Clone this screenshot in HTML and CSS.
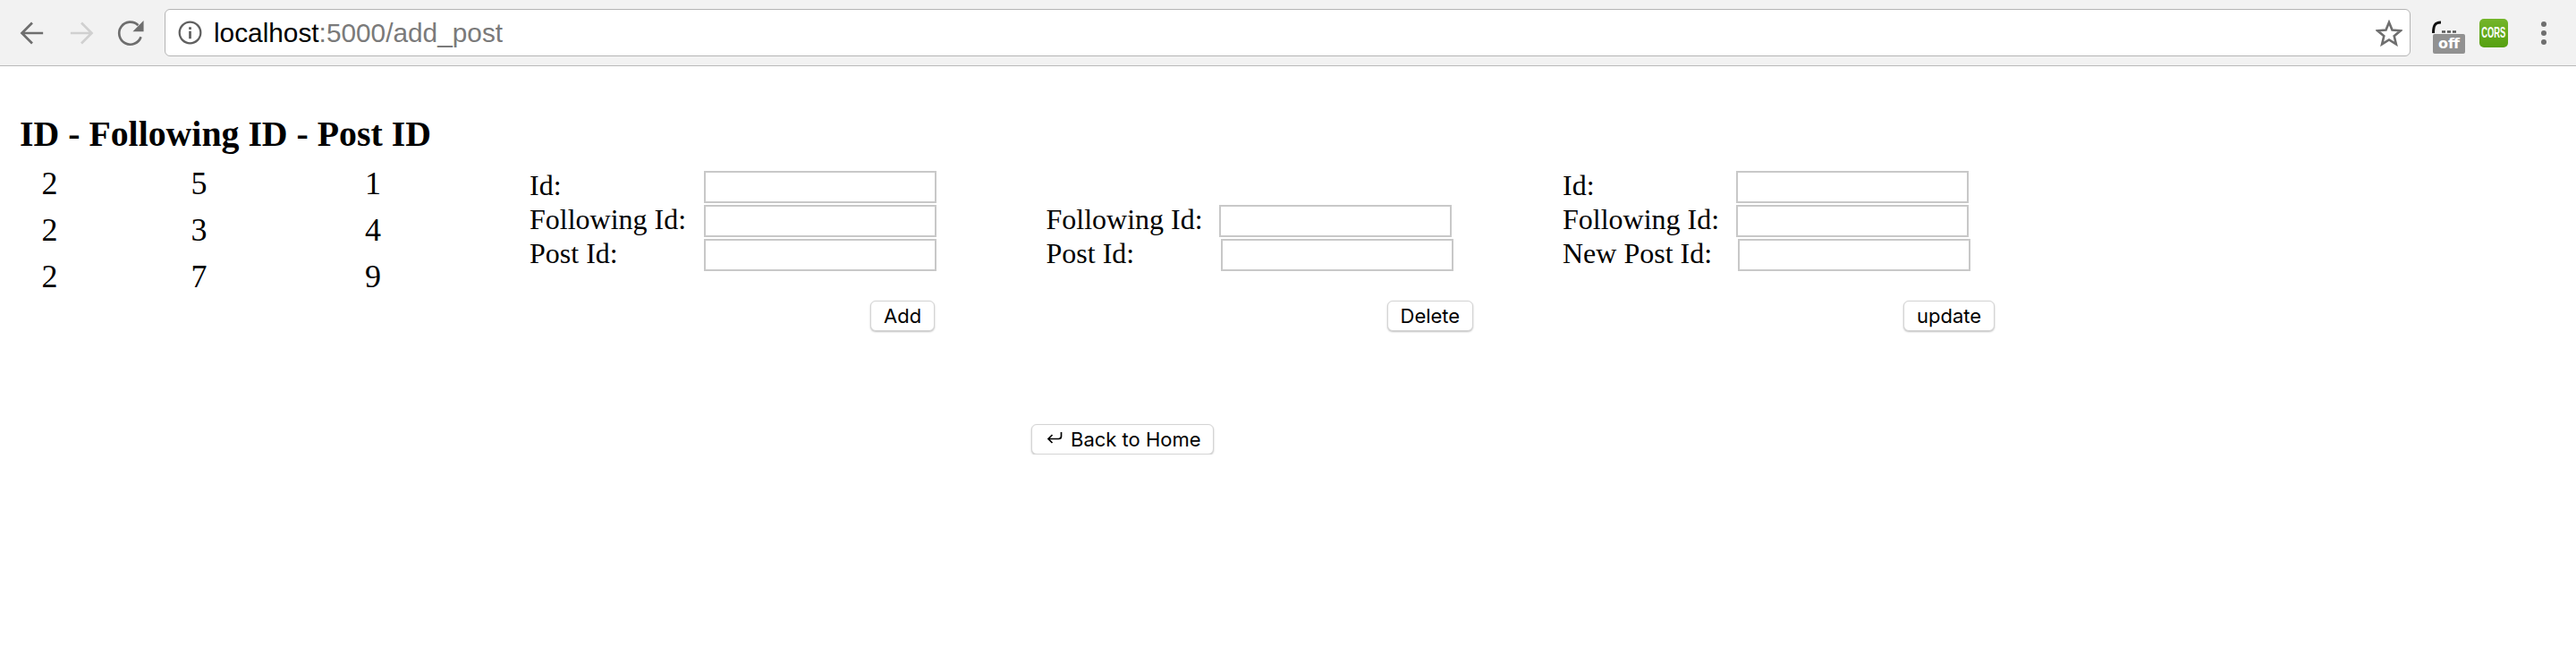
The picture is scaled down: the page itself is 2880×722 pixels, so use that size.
FILE: index.html
```html
<!DOCTYPE html>
<html lang="en">
<head>
  <meta charset="UTF-8">
  <meta name="viewport" content="width=device-width, initial-scale=1.0">
  <title>Add Post</title>
  <link rel="stylesheet" href="styles.css">
</head>
<body>
  <div class="toolbar">
    <svg class="nav-icon" viewBox="0 0 28 28"><path d="M24 14H5M14 4.500L4.500 14L14 23.500" fill="none" stroke="#6e6e6e" stroke-width="2.200"/></svg>
    <svg class="nav-icon" viewBox="0 0 28 28"><path d="M4 14H23M14 4.500L23.500 14L14 23.500" fill="none" stroke="#d0d0d0" stroke-width="2.200"/></svg>
    <svg class="nav-icon" viewBox="0 0 28 28"><path d="M23.500 17.500A10.300 10.300 0 1 1 21 6.800" fill="none" stroke="#6e6e6e" stroke-width="2.200"/><path d="M26 2.500V12.500H16Z" fill="#6e6e6e"/></svg>
    <div class="address">
      <svg class="info-icon" viewBox="0 0 24 24"><circle cx="12" cy="12" r="10.500" fill="none" stroke="#5f5f5f" stroke-width="2"/><path d="M10.800 6.500h2.400v2.300h-2.400zM10.800 10.500h2.400v7.500h-2.400z" fill="#5f5f5f"/></svg>
      <span class="url"><span class="host">localhost</span>:5000/add_post</span>
      <svg class="star-icon" viewBox="0 0 30 30"><path d="M15 3L18.500 11.600L27.800 12.300L20.700 18.300L22.900 27.400L15 22.500L7.100 27.400L9.300 18.300L2.200 12.300L11.500 11.600Z" fill="none" stroke="#6e6e6e" stroke-width="2.600"/></svg>
    </div>
    <div class="extensions">
      <div class="ext-off">
        <svg class="ext-off-mark" viewBox="0 0 28 14"><path d="M10 2C3 2 1.500 6 1.500 14" fill="none" stroke="#111" stroke-width="3"/><path d="M11 12.500h4M17 12.500h4M23 12.500h4" stroke="#555" stroke-width="2.500"/></svg>
        <span class="ext-off-badge">off</span>
      </div>
      <span class="ext-cors"><span class="ext-cors-text">CORS</span></span>
      <div class="menu-dots"><i></i><i></i><i></i></div>
    </div>
  </div>

  <h3 class="title">ID - Following ID - Post ID</h3>

  <div class="main">
    <table class="posts">
      <tr><td>2</td><td>5</td><td>1</td></tr>
      <tr><td>2</td><td>3</td><td>4</td></tr>
      <tr><td>2</td><td>7</td><td>9</td></tr>
    </table>

    <form class="post-form">
      <div class="row"><label class="w195">Id:</label><input type="text"></div>
      <div class="row"><label class="w195">Following Id:</label><input type="text"></div>
      <div class="row"><label class="w195">Post Id:</label><input type="text"></div>
      <div class="actions"><button type="button">Add</button></div>
    </form>

    <form class="post-form">
      <div class="row"></div>
      <div class="row"><label class="w193">Following Id:</label><input type="text"></div>
      <div class="row"><label class="w195">Post Id:</label><input type="text"></div>
      <div class="actions"><button type="button">Delete</button></div>
    </form>

    <form class="post-form">
      <div class="row"><label class="w194">Id:</label><input type="text"></div>
      <div class="row"><label class="w194">Following Id:</label><input type="text"></div>
      <div class="row"><label class="w196">New Post Id:</label><input type="text"></div>
      <div class="actions"><button type="button">update</button></div>
    </form>
  </div>

  <div class="back">
    <button type="button" class="back-btn">
      <svg class="back-arrow" viewBox="0 0 18 15"><path d="M16.500 1V5.500Q16.500 8.500 13.500 8.500H2M6.500 4L2 8.500L6.500 13" fill="none" stroke="#000" stroke-width="1.700"/></svg>
      <span>Back to Home</span>
    </button>
  </div>
</body>
</html>
```

FILE: styles.css
```css
body { margin: 0; background: #fff; color: #000; font-family: "Liberation Serif", serif; }

.toolbar {
  display: flex; align-items: center; gap: 21px;
  height: 73px; padding-left: 19px;
  background: #f2f2f2; border-bottom: 1px solid #b9b9b9;
}
.nav-icon { width: 34px; height: 34px; flex: none; }
.address {
  display: flex; align-items: center;
  flex: none; box-sizing: border-box;
  width: 2511px; height: 53px; padding: 0 8px 0 14px;
  background: #fff; border: 1px solid #b4b4b4; border-radius: 6px;
}
.info-icon { width: 27px; height: 27px; flex: none; }
.url { margin-left: 13px; font: 29.800px "Liberation Sans", sans-serif; color: #7a7a7a; }
.host { color: #000; }
.star-icon { width: 30px; height: 30px; margin-left: auto; }

.extensions { display: flex; align-items: center; margin-left: 3px; }
.ext-off { position: relative; width: 38px; height: 38px; margin-top: 11px; }
.ext-off-mark { position: absolute; left: 0; top: 0; width: 28px; height: 14px; }
.ext-off-badge {
  position: absolute; left: 1px; top: 15px;
  width: 36px; height: 22px; border-radius: 2px;
  background: #919191; color: #fff; text-align: center;
  font: bold 16px/21px "DejaVu Sans", sans-serif;
}
.ext-cors {
  width: 32px; height: 32px; margin-left: 15px;
  background: linear-gradient(#74b52a, #56a010); border-radius: 5px;
  color: #fff; text-align: center;
  font: bold 13px/32px "Liberation Sans", sans-serif;
}
.ext-cors-text { display: inline-block; transform: scale(0.72, 1.25); margin-left: -6px; margin-right: -6px; }
.menu-dots { display: flex; flex-direction: column; gap: 4px; margin-left: 37px; }
.menu-dots i { width: 6px; height: 6px; border-radius: 50%; background: #6e6e6e; }

.title { margin: 55px 0 0 22px; font-size: 39.800px; line-height: 43px; font-weight: bold; }

.main { display: flex; margin-top: 7px; padding-left: 22px; }
.posts {
  width: 456px; margin-right: 114px; flex: none; align-self: flex-start;
  table-layout: fixed; border-collapse: collapse; font-size: 36px;
}
.posts td { height: 52px; padding: 0; text-align: center; }
.posts td:nth-child(1) { width: 67px; }
.posts td:nth-child(2) { width: 267px; }
.posts td:nth-child(3) { width: 122px; }

.post-form { width: 577.500px; flex: none; padding-top: 12px; }
.row { display: flex; height: 38px; font-size: 32px; line-height: 32px; }
.w193 { width: 193px; }
.w194 { width: 194px; }
.w195 { width: 195px; }
.w196 { width: 196px; }
.row input {
  box-sizing: border-box; width: 260px; height: 36px; padding: 0;
  background: #fff; border: 2px solid #c8c8c8;
}
.actions { margin-top: 31px; padding-left: 381px; }
button {
  height: 34px; padding: 0 14px;
  background: #fff; color: #000;
  border: 1px solid #d4d4d4; border-radius: 6px;
  box-shadow: 0 1px 2px rgba(0,0,0,0.25);
  font: 22px "Inter", sans-serif;
}

.back { margin-top: 104px; padding-left: 1153px; }
.back-btn { display: flex; align-items: center; height: 34px; width: 204px; padding: 0 0 0 16px; white-space: nowrap; }
.back-arrow { width: 18px; height: 15px; margin-right: 9px; margin-top: -3px; flex: none; }
```
